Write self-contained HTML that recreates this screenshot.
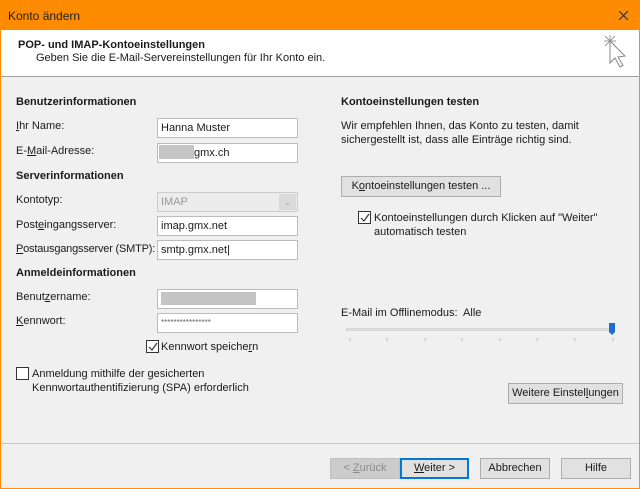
<!DOCTYPE html>
<html><head><meta charset="utf-8"><style>
*{margin:0;padding:0;box-sizing:border-box}
body{width:640px;height:489px;position:relative;background:#f0f0f0;font-family:"Liberation Sans",sans-serif;font-size:11px;color:#1a1a1a;overflow:hidden}
.a{position:absolute;white-space:nowrap}
.b{font-weight:bold}
.in{position:absolute;background:#fff;border:1px solid #bcbcbc;height:20px;padding:3px 3px;font-size:11px}
.btn{position:absolute;background:#e1e1e1;border:1px solid #adadad;height:21px;text-align:center;line-height:19px}
.cb{position:absolute;width:13px;height:13px;border:1px solid #333;background:#fff}
u{text-decoration:underline}
</style></head><body>
<div class="a" style="left:0;top:0;width:640px;height:30px;background:#ff8c00"></div>
<div class="a" style="left:8px;top:9px;font-size:12px;color:#222">Konto ändern</div>
<svg class="a" style="left:0;top:0" width="640" height="30"><path d="M619 11l9 9M628 11l-9 9" stroke="#333" stroke-width="1.2" fill="none"/></svg>
<div class="a" style="left:0;top:30px;width:1px;height:459px;background:#ff8c00"></div>
<div class="a" style="left:639px;top:30px;width:1px;height:459px;background:#ff8c00"></div>
<div class="a" style="left:0;top:488px;width:640px;height:1px;background:#ff8c00"></div>
<div class="a" style="left:1px;top:30px;width:638px;height:47px;background:#fff;border-bottom:1px solid #a0a0a0"></div>
<div class="a b" style="left:18px;top:39px">POP- und IMAP-Kontoeinstellungen</div>
<div class="a" style="left:36px;top:52px">Geben Sie die E-Mail-Servereinstellungen für Ihr Konto ein.</div>
<svg class="a" style="left:600px;top:33px" width="36" height="42" fill="none" stroke="#999" stroke-width="1"><path d="M10 2v12M4 8h12M5 3l10 10M15 3L5 13"/><path d="M10 8l0 22 5-5 5 9 3-1.5-5-8.5 7-1z" fill="#fff" stroke="#888"/></svg>

<div class="a b" style="left:16px;top:96px">Benutzerinformationen</div>
<div class="a" style="left:16px;top:120px"><u>I</u>hr Name:</div>
<div class="in" style="left:157px;top:118px;width:141px">Hanna Muster</div>
<div class="a" style="left:16px;top:145px">E-<u>M</u>ail-Adresse:</div>
<div class="in" style="left:157px;top:143px;width:141px"><span style="display:inline-block;width:35px;height:14px;background:#c4c4c4;vertical-align:middle;margin-left:-2px;margin-top:-3px"></span>gmx.ch</div>
<div class="a b" style="left:16px;top:170px">Serverinformationen</div>
<div class="a" style="left:16px;top:194px">Kontotyp:</div>
<div class="in" style="left:157px;top:192px;width:141px;background:#ececec;border-color:#ccc;color:#999">IMAP<span style="position:absolute;right:1px;top:1px;width:17px;height:16px;background:#dadada;color:#aaa;font-size:9px;text-align:center;line-height:16px">&#8964;</span></div>
<div class="a" style="left:16px;top:219px">Post<u>e</u>ingangsserver:</div>
<div class="in" style="left:157px;top:216px;width:141px">imap.gmx.net</div>
<div class="a" style="left:16px;top:243px;letter-spacing:-0.2px"><u>P</u>ostausgangsserver (SMTP):</div>
<div class="in" style="left:157px;top:240px;width:141px">smtp.gmx.net|</div>
<div class="a b" style="left:16px;top:267px">Anmeldeinformationen</div>
<div class="a" style="left:16px;top:291px">Benut<u>z</u>ername:</div>
<div class="in" style="left:157px;top:289px;width:141px"><span style="display:block;width:95px;height:13px;background:#c4c4c4;margin-top:-1px"></span></div>
<div class="a" style="left:16px;top:315px"><u>K</u>ennwort:</div>
<div class="in" style="left:157px;top:313px;width:141px;font-size:8px;padding-top:4px;color:#666">****************</div>
<div class="cb" style="left:146px;top:340px"><svg width="11" height="11" style="display:block"><path d="M2 6l3 3 5-7" stroke="#333" fill="none" stroke-width="1.2"/></svg></div>
<div class="a" style="left:161px;top:341px">Kennwort speiche<u>r</u>n</div>
<div class="cb" style="left:16px;top:367px"></div>
<div class="a" style="left:32px;top:367px;line-height:14px">Anmeldung mithilfe der gesicherten<br>Kennwortauthentifizierung (SPA) erforderlich</div>

<div class="a b" style="left:341px;top:96px">Kontoeinstellungen testen</div>
<div class="a" style="left:341px;top:120px;line-height:13.5px">Wir empfehlen Ihnen, das Konto zu testen, damit<br>sichergestellt ist, dass alle Einträge richtig sind.</div>
<div class="btn" style="left:341px;top:176px;width:160px">K<u>o</u>ntoeinstellungen testen ...</div>
<div class="cb" style="left:358px;top:211px"><svg width="11" height="11" style="display:block"><path d="M2 6l3 3 5-7" stroke="#333" fill="none" stroke-width="1.2"/></svg></div>
<div class="a" style="left:374px;top:211px;line-height:14px">Kontoeinstellungen durch Klicken auf "Weiter"<br>automatisch testen</div>
<div class="a" style="left:341px;top:307px">E-Mail im Offlinemodus:&nbsp; Alle</div>
<div class="a" style="left:346px;top:328px;width:268px;height:3px;background:#e2e2e2;border:1px solid #d4d4d4"></div>
<svg class="a" style="left:340px;top:320px" width="280" height="24"><path d="M10 18v3M47 18v3M85 18v3M122 18v3M160 18v3M197 18v3M235 18v3M273 18v3" stroke="#bbb"/><path d="M269 3h6v9l-3 3-3-3z" fill="#1a6fd0"/></svg>
<div class="btn" style="left:508px;top:383px;width:115px">Weitere Einstel<u>l</u>ungen</div>
<div class="a" style="left:1px;top:443px;width:638px;height:1px;background:#c8c8c8"></div>
<div class="btn" style="left:330px;top:458px;width:70px;background:#ccc;border-color:#bfbfbf;color:#8a8a8a">&lt; <u>Z</u>urück</div>
<div class="btn" style="left:400px;top:458px;width:69px;border:2px solid #0078d7;line-height:17px"><u>W</u>eiter &gt;</div>
<div class="btn" style="left:480px;top:458px;width:70px">Abbrechen</div>
<div class="btn" style="left:561px;top:458px;width:70px">Hilfe</div>
</body></html>
